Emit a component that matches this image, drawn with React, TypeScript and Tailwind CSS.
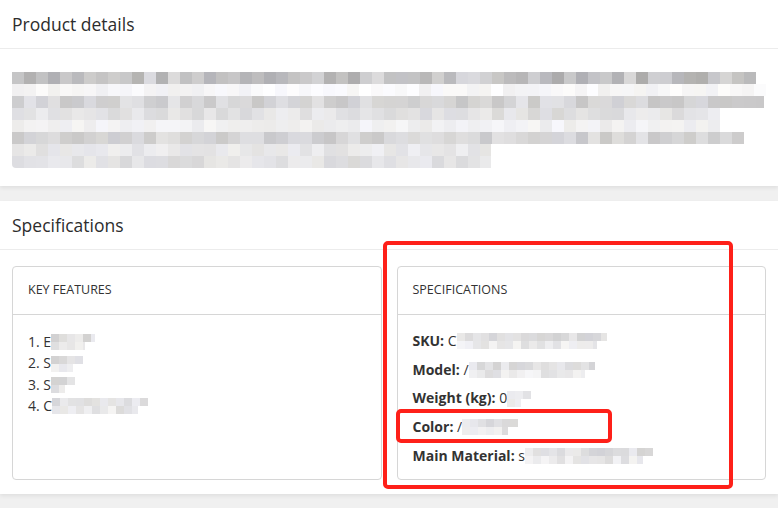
import React from "react";

// pseudo-random so the pixelated (redacted) text looks the same every render
function makeRng(seed: number) {
  let s = seed;
  return () => {
    s = (s * 9301 + 49297) % 233280;
    return s / 233280;
  };
}

type Row = { w: number; lo: number; hi: number };

function Mosaic({ rows, seed, cell = 12 }: { rows: Row[]; seed: number; cell?: number }) {
  const rnd = makeRng(seed);
  return (
    <div className="flex flex-col">
      {rows.map((row, i) => {
        const cells = Math.ceil(row.w / cell);
        return (
          <div key={i} className="flex" style={{ height: cell }}>
            {Array.from({ length: cells }).map((_, j) => {
              const v = Math.round(row.lo + rnd() * (row.hi - row.lo));
              const t = Math.round(rnd() * 8 - 3);
              const w = j === cells - 1 ? row.w - cell * (cells - 1) : cell;
              return (
                <div
                  key={j}
                  style={{ width: w, backgroundColor: `rgb(${v},${v - (t > 0 ? 0 : 1)},${Math.min(255, v + t)})` }}
                />
              );
            })}
          </div>
        );
      })}
    </div>
  );
}

// small blurred value used after a visible first letter
function Blur({ w, seed, lo = 210, hi = 238 }: { w: number; seed: number; lo?: number; hi?: number }) {
  return (
    <span className="inline-block align-middle -mt-[2px]">
      <Mosaic seed={seed} rows={[{ w, lo, hi }, { w: Math.max(12, w - 10), lo: lo + 10, hi: hi + 8 }]} cell={8} />
    </span>
  );
}

const detailRows: Row[] = [
  { w: 744, lo: 172, hi: 222 },
  { w: 756, lo: 240, hi: 255 },
  { w: 752, lo: 198, hi: 230 },
  { w: 708, lo: 216, hi: 238 },
  { w: 708, lo: 234, hi: 247 },
  { w: 732, lo: 198, hi: 228 },
  { w: 479, lo: 224, hi: 241 },
  { w: 479, lo: 216, hi: 236 },
];

const features = [
  { n: "1. E", w: 44 },
  { n: "2. S", w: 32 },
  { n: "3. S", w: 24 },
  { n: "4. C", w: 96 },
];

const specs = [
  { label: "SKU", first: "C", w: 150 },
  { label: "Model", first: "/", w: 126 },
  { label: "Weight (kg)", first: "0", w: 24 },
  { label: "Color", first: "/", w: 56 },
  { label: "Main Material", first: "s", w: 128 },
];

export default function App() {
  return (
    <div className="relative min-h-screen bg-[#f0f0f0] pb-4 font-['Open_Sans',sans-serif] text-[#333]">
      {/* Product details */}
      <section className="bg-white shadow-[0_2px_4px_rgba(0,0,0,0.07)]">
        <div className="h-[49px] px-3 flex items-center border-b border-[#ececec]">
          <h2 className="text-[17.5px] text-[#2d2d2d]">Product details</h2>
        </div>
        <div className="px-3 pt-[23px] pb-[18px]">
          <div className="rounded-bl-[4px] overflow-hidden">
            <Mosaic rows={detailRows} seed={7} />
          </div>
        </div>
      </section>

      {/* Specifications */}
      <section className="mt-[15px] bg-white shadow-[0_2px_4px_rgba(0,0,0,0.07)]">
        <div className="h-[49px] px-3 flex items-center border-b border-[#ececec]">
          <h2 className="text-[17.5px] text-[#2d2d2d]">Specifications</h2>
        </div>
        <div className="px-3 pt-4 pb-[14px] flex gap-[15px]">
          <div className="w-[370px] h-[214px] border border-[#d6d6d6] rounded-[4px]">
            <div className="h-12 px-[15px] flex items-center border-b border-[#d6d6d6] text-[12.5px] uppercase">
              Key Features
            </div>
            <ol className="px-[15px] pt-[16px] text-[14px] leading-[21.4px]">
              {features.map((f, i) => (
                <li key={i}>
                  {f.n}
                  <Blur w={f.w} seed={20 + i} />
                </li>
              ))}
            </ol>
          </div>
          <div className="w-[370px] h-[214px] border border-[#d6d6d6] rounded-[4px]">
            <div className="h-12 px-[15px] flex items-center border-b border-[#d6d6d6] text-[12.5px] uppercase">
              Specifications
            </div>
            <ul className="px-[15px] pt-[16px] flex flex-col gap-[8.7px] text-[14px] leading-[20px]">
              {specs.map((s, i) => (
                <li key={i}>
                  <b className="font-bold">{s.label}:</b> {s.first}
                  <Blur w={s.w} seed={40 + i} />
                </li>
              ))}
            </ul>
          </div>
        </div>
      </section>

      {/* red annotation boxes drawn over the screenshot */}
      <div className="absolute left-[383px] top-[241px] w-[350px] h-[248px] border-4 border-[#fe2019] rounded-[5px] pointer-events-none" />
      <div className="absolute left-[396px] top-[409px] w-[216px] h-[34px] border-4 border-[#fe2019] rounded-[5px] pointer-events-none" />
    </div>
  );
}
